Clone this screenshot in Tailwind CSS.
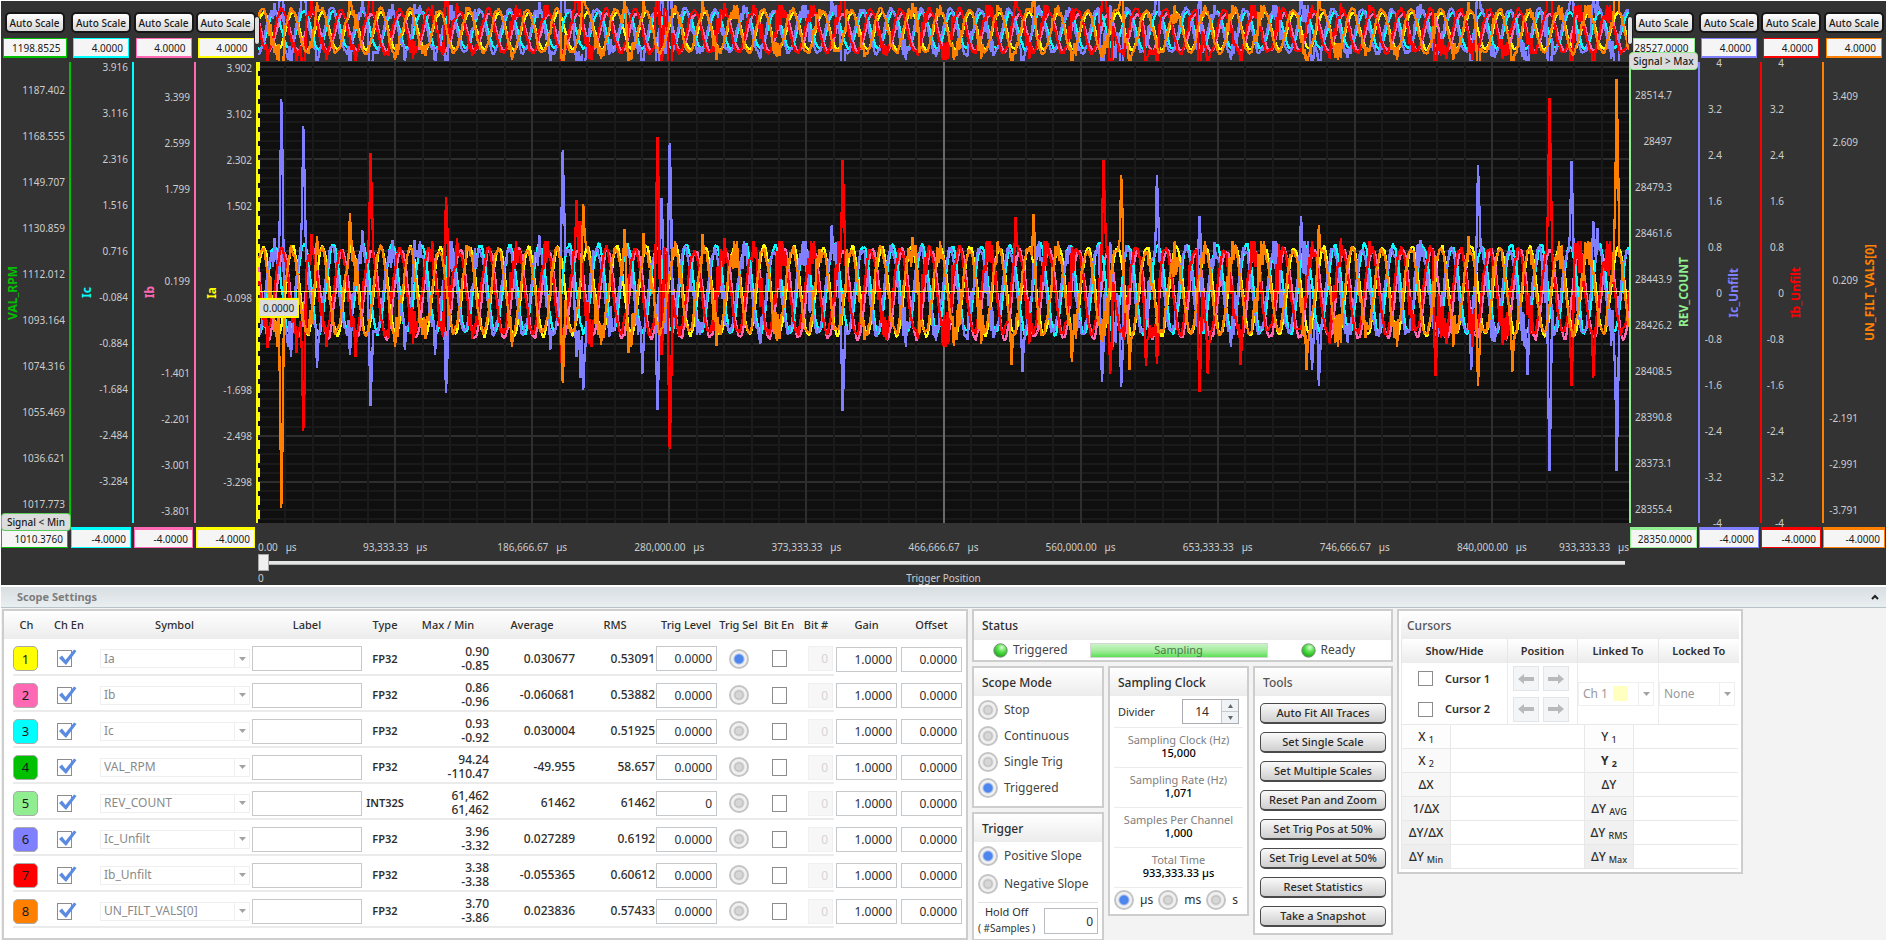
<!DOCTYPE html>
<html lang="en">
<head>
<meta charset="utf-8">
<title>Scope</title>
<script src="https://cdn.jsdelivr.net/npm/@tailwindcss/browser@4"></script>
</head>
<body class="min-h-screen bg-[#f3f3f3] text-[#2e2e2e] font-['Noto_Sans',sans-serif] text-[12px] leading-4">

<main class="flex flex-col border-l border-r border-white">

<!-- Scope display -->
<section class="flex border-t border-white bg-[#333333] pb-6 text-[10px] text-[#cccccc]" aria-label="Scope display">
  <div id="axes-left" class="flex"></div>

  <div class="flex min-w-0 flex-1 flex-col">
    <div class="relative h-[60px]">
      <svg id="overview" class="block h-full w-full" viewBox="0 0 1371 60" preserveAspectRatio="none" shape-rendering="crispEdges"></svg>
      <div class="absolute -left-1 top-[15px] h-[29px] w-[6px] rounded-sm border border-[#1c1c1c] bg-[#dedede]"></div>
      <div class="absolute -right-1 top-[15px] h-[29px] w-[6px] rounded-sm border border-[#1c1c1c] bg-[#dedede]"></div>
    </div>
    <div class="relative mt-px h-[461px] bg-[#0f0f0f]">
      <svg id="plot" class="block h-full w-full" viewBox="0 0 1371 461" preserveAspectRatio="none" shape-rendering="crispEdges"></svg>
      <div class="absolute left-0 top-[236px] border-2 border-[#ffff00] bg-[#dcdcdc] px-[3px] text-[10px] leading-4 text-[#1a1a1a]">0.0000</div>
    </div>
    <div class="mt-4 grid grid-cols-20 whitespace-pre leading-4" id="time-labels"></div>
    <input type="range" aria-label="Trigger Position" value="0" class="-mt-px h-[17px] w-full appearance-none bg-transparent pr-1 [&::-webkit-slider-runnable-track]:h-[4px] [&::-webkit-slider-runnable-track]:border-b [&::-webkit-slider-runnable-track]:border-[#b5b5b5] [&::-webkit-slider-runnable-track]:bg-[#e3e6e5] [&::-webkit-slider-thumb]:-mt-[7px] [&::-webkit-slider-thumb]:h-[17px] [&::-webkit-slider-thumb]:w-[11px] [&::-webkit-slider-thumb]:appearance-none [&::-webkit-slider-thumb]:border [&::-webkit-slider-thumb]:border-[#a8a8a8] [&::-webkit-slider-thumb]:bg-[#f0f0f0]">
    <div class="-mb-6 grid grid-cols-3 leading-[14px]"><span>0</span><span class="text-center">Trigger Position</span><span></span></div>
  </div>

  <div id="axes-right" class="flex"></div>
</section>

<!-- Settings header -->
<header class="flex h-[23px] items-center justify-between border-b border-t-2 border-b-[#b9c3ca] border-t-white bg-linear-to-b from-[#d9dee2] to-[#e9eef1] pl-4 pr-[7px]">
  <h1 class="text-[11px] font-bold text-[#7d7d7d]">Scope Settings</h1>
  <button type="button" aria-label="Collapse" class="flex"><svg width="8" height="6" viewBox="0 0 8 6"><path d="M1 5 L4 2 L7 5" fill="none" stroke="#222" stroke-width="2"/></svg></button>
</header>

<!-- Settings panels -->
<div class="flex items-start gap-1 pl-px pt-px">

  <section class="w-[966px] shrink-0 border-2 border-[#cdcdcd] bg-white pb-[10px]">
    <table class="w-full table-fixed border-collapse">
      <colgroup>
        <col class="w-[9px]"><col class="w-[27px]"><col class="w-[58px]"><col class="w-[153px]"><col class="w-[112px]"><col class="w-[44px]"><col class="w-[82px]"><col class="w-[86px]"><col class="w-[80px]"><col class="w-[62px]"><col class="w-[43px]"><col class="w-[38px]"><col class="w-[36px]"><col class="w-[65px]"><col class="w-[65px]"><col>
      </colgroup>
      <thead>
        <tr class="h-[28px] whitespace-nowrap bg-linear-to-b from-white to-[#ececec] text-[11px] [&>th]:p-0 [&>th]:font-medium">
          <th></th><th>Ch</th><th>Ch En</th><th>Symbol</th><th>Label</th><th>Type</th><th>Max / Min</th><th>Average</th><th>RMS</th><th>Trig Level</th><th>Trig Sel</th><th>Bit En</th><th>Bit #</th><th>Gain</th><th>Offset</th><th></th>
        </tr>
      </thead>
      <tbody id="channels"></tbody>
    </table>
  </section>

  <div class="flex w-[421px] shrink-0 flex-col gap-1">
    <section class="border-2 border-[#cdcdcd] bg-white">
      <h2 class="h-[29px] bg-linear-to-b from-white to-[#ececec] pl-2 pt-[7px] text-[12px] font-medium">Status</h2>
      <div class="flex h-5 items-center pl-[19px] pr-9">
        <svg width="15" height="15" viewBox="0 0 15 15"><use href="#led"/></svg>
        <span class="ml-[5px] text-[#444]">Triggered</span>
        <div role="progressbar" aria-label="Sampling" class="ml-[22px] flex h-[15px] w-[178px] items-center justify-center border border-[#d5d5d5] bg-linear-to-b from-[#c8f5c4] via-[#a5ec9f] via-50% to-[#58e052] text-[11px] text-[#4b7a4b]">Sampling</div>
        <svg class="ml-auto" width="15" height="15" viewBox="0 0 15 15"><use href="#led"/></svg>
        <span class="ml-[5px] text-[#444]">Ready</span>
      </div>
    </section>

    <div class="flex items-start gap-1">
      <div class="flex w-[132px] flex-col gap-1">
        <section class="border-2 border-[#cdcdcd] bg-white pb-2">
          <h2 class="h-7 bg-linear-to-b from-white to-[#ececec] pl-2 pt-[7px] text-[12px] font-medium">Scope Mode</h2>
          <div class="flex flex-col gap-[6px] px-1 pt-1 text-[#444]" id="modes"></div>
        </section>
        <section class="border-2 border-[#cdcdcd] bg-white">
          <h2 class="h-7 bg-linear-to-b from-white to-[#ececec] pl-2 pt-[7px] text-[12px] font-medium">Trigger</h2>
          <div class="flex flex-col gap-2 px-1 pb-2 pt-1 text-[#444]" id="slopes"></div>
          <div class="mx-1 flex justify-between border-t border-[#e2e2e2] pb-[2px]">
            <label for="hold" class="flex flex-col text-center text-[11px] leading-[17px]">Hold Off<span class="text-[10px]">( #Samples )</span></label>
            <input id="hold" value="0" class="mt-[5px] h-[26px] w-[54px] border border-[#b9bcc0] px-1 text-right">
          </div>
        </section>
      </div>

      <section class="w-[141px] border-2 border-[#cdcdcd] bg-white pb-1">
        <h2 class="h-7 bg-linear-to-b from-white to-[#ececec] pl-2 pt-[7px] text-[12px] font-medium">Sampling Clock</h2>
        <div class="mx-1 flex h-[31px] items-center justify-between pl-1 pr-1">
          <label for="divider" class="text-[11px]">Divider</label>
          <span class="flex h-[25px] w-[57px] border border-[#a9adb1]">
            <input id="divider" value="14" class="w-[38px] min-w-0 text-center">
            <span class="flex flex-1 flex-col divide-y divide-[#c9c9c9] border-l border-[#c9c9c9] bg-[#f0f3f5]">
              <button type="button" aria-label="Increase" class="flex flex-1 items-center justify-center"><svg width="5" height="4" viewBox="0 0 5 4"><path d="M0 4h5L2.500 0z" fill="#666"/></svg></button>
              <button type="button" aria-label="Decrease" class="flex flex-1 items-center justify-center"><svg width="5" height="4" viewBox="0 0 5 4"><path d="M0 0h5L2.500 4z" fill="#666"/></svg></button>
            </span>
          </span>
        </div>
        <dl class="mx-1 border-b border-[#ececec] text-center text-[11px] [&>div]:h-10 [&>div]:border-t [&>div]:border-[#ececec] [&>div]:pt-[5px] [&>div]:leading-[13px] [&_dd]:text-[11px] [&_dd]:font-medium [&_dd]:text-black [&_dt]:text-[#808080]">
          <div><dt>Sampling Clock (Hz)</dt><dd>15,000</dd></div>
          <div><dt>Sampling Rate (Hz)</dt><dd>1,071</dd></div>
          <div><dt>Samples Per Channel</dt><dd>1,000</dd></div>
          <div><dt>Total Time</dt><dd>933,333.33 µs</dd></div>
        </dl>
        <div class="flex items-center gap-[5px] px-1 pt-[2px]" id="units"></div>
      </section>

      <section class="w-[140px] border-2 border-[#cdcdcd] bg-white pb-[6px]">
        <h2 class="h-7 bg-linear-to-b from-white to-[#ececec] pl-2 pt-[7px] text-[12px] font-medium text-[#555]">Tools</h2>
        <div class="flex flex-col gap-2 px-[5px] pt-[7px] [&>button]:h-[21px] [&>button]:rounded-[5px] [&>button]:border [&>button]:border-b-2 [&>button]:border-[#4a4a4a] [&>button]:bg-linear-to-b [&>button]:from-[#fafafa] [&>button]:to-[#cfcfcf] [&>button]:text-[11px] [&>button]:leading-[14px] [&>button]:font-medium [&>button]:text-[#2a2a2a]">
          <button type="button">Auto Fit All Traces</button>
          <button type="button">Set Single Scale</button>
          <button type="button">Set Multiple Scales</button>
          <button type="button">Reset Pan and Zoom</button>
          <button type="button">Set Trig Pos at 50%</button>
          <button type="button">Set Trig Level at 50%</button>
          <button type="button">Reset Statistics</button>
          <button type="button">Take a Snapshot</button>
        </div>
      </section>
    </div>
  </div>

  <section class="w-[346px] shrink-0 border-2 border-[#cdcdcd] bg-white px-[2px] pb-[3px]">
    <h2 class="h-7 bg-linear-to-b from-white to-[#ececec] pl-[6px] pt-[7px] text-[12px] font-medium text-[#555]">Cursors</h2>
    <table class="w-[337px] table-fixed border-collapse">
      <colgroup><col class="w-[106px]"><col class="w-[70px]"><col class="w-[81px]"><col class="w-[80px]"></colgroup>
      <thead><tr class="h-6 bg-linear-to-b from-white to-[#ececec] text-[11px] [&>th]:border-l [&>th]:border-[#e6e6e6] [&>th]:p-0 [&>th]:font-semibold"><th>Show/Hide</th><th>Position</th><th>Linked To</th><th>Locked To</th></tr></thead>
      <tbody>
        <tr class="h-[31px] [&>td]:border-l [&>td]:border-[#ececec] [&>td]:p-0">
          <td><label class="flex items-center gap-3 pl-4 text-[11px] font-semibold"><input type="checkbox" class="h-[15px] w-[15px] appearance-none border border-[#8c8c8c] bg-white">Cursor 1</label></td>
          <td><div class="flex gap-1 pl-[5px] [&>button]:flex [&>button]:h-[25px] [&>button]:w-[26px] [&>button]:items-center [&>button]:justify-center [&>button]:border [&>button]:border-[#e3e6e8] [&>button]:bg-[#f4f5f6]"><button type="button" aria-label="Cursor 1 left"><svg width="16" height="10"><use href="#arrow-left"/></svg></button><button type="button" aria-label="Cursor 1 right"><svg width="16" height="10" class="-scale-x-100"><use href="#arrow-left"/></svg></button></div></td>
          <td rowspan="2"><div class="relative flex w-[76px] items-center">
            <select aria-label="Linked To" class="h-6 w-full appearance-none border border-[#efefef] bg-white pl-1 text-[#999]"><option>Ch 1</option></select>
            <span class="pointer-events-none absolute left-[35px] h-[15px] w-[15px] rounded-[2px] bg-[#ffffbf]"></span>
            <span class="pointer-events-none absolute right-0 flex h-6 w-4 items-center justify-center border-l border-[#efefef]"><svg width="7" height="4"><use href="#caret"/></svg></span>
          </div></td>
          <td rowspan="2"><div class="relative flex w-[76px] items-center">
            <select aria-label="Locked To" class="h-6 w-full appearance-none border border-[#efefef] bg-white pl-1 text-[#999]"><option>None</option></select>
            <span class="pointer-events-none absolute right-0 flex h-6 w-4 items-center justify-center border-l border-[#efefef]"><svg width="7" height="4"><use href="#caret"/></svg></span>
          </div></td>
        </tr>
        <tr class="h-[30px] [&>td]:border-l [&>td]:border-[#ececec] [&>td]:p-0">
          <td><label class="flex items-center gap-3 pl-4 text-[11px] font-semibold"><input type="checkbox" class="h-[15px] w-[15px] appearance-none border border-[#8c8c8c] bg-white">Cursor 2</label></td>
          <td><div class="flex gap-1 pl-[5px] [&>button]:flex [&>button]:h-[25px] [&>button]:w-[26px] [&>button]:items-center [&>button]:justify-center [&>button]:border [&>button]:border-[#e3e6e8] [&>button]:bg-[#f4f5f6]"><button type="button" aria-label="Cursor 2 left"><svg width="16" height="10"><use href="#arrow-left"/></svg></button><button type="button" aria-label="Cursor 2 right"><svg width="16" height="10" class="-scale-x-100"><use href="#arrow-left"/></svg></button></div></td>
        </tr>
      </tbody>
    </table>
    <table class="w-[337px] table-fixed border-collapse text-[12px] [&_sub]:text-[9px] [&_td]:border [&_td]:border-r-0 [&_td]:border-[#e8e8e8] [&_th]:border [&_th]:border-[#e8e8e8] [&_th]:p-0 [&_th]:font-medium [&_tr]:h-6">
      <colgroup><col class="w-[49px]"><col class="w-[134px]"><col class="w-[49px]"><col></colgroup>
      <tbody>
        <tr><th class="bg-[#fdfdfd]">X <sub>1</sub></th><td></td><th class="bg-[#fdfdfd]">Y <sub>1</sub></th><td></td></tr>
        <tr><th class="bg-[#fafafa]">X <sub>2</sub></th><td></td><th class="bg-[#fafafa]"><b>Y <sub>2</sub></b></th><td></td></tr>
        <tr><th class="bg-[#f7f7f7]">ΔX</th><td></td><th class="bg-[#f7f7f7]">ΔY</th><td></td></tr>
        <tr><th class="bg-[#f4f4f4]">1/ΔX</th><td></td><th class="bg-[#f4f4f4]">ΔY <sub>AVG</sub></th><td></td></tr>
        <tr><th class="bg-[#f1f1f1]">ΔY/ΔX</th><td></td><th class="bg-[#f1f1f1]">ΔY <sub>RMS</sub></th><td></td></tr>
        <tr><th class="bg-[#eeeeee]">ΔY <sub>Min</sub></th><td></td><th class="bg-[#eeeeee]">ΔY <sub>Max</sub></th><td></td></tr>
      </tbody>
    </table>
  </section>
</div>
</main>

<svg width="0" height="0" class="absolute" aria-hidden="true">
  <defs>
    <radialGradient id="led-fill" cx="0.6" cy="0.28" r="0.75"><stop offset="0" stop-color="#d8ffcf"/><stop offset="0.45" stop-color="#55e04a"/><stop offset="1" stop-color="#12a512"/></radialGradient>
    <g id="led"><circle cx="7.500" cy="7.500" r="6.700" fill="url(#led-fill)" stroke="#7d8f7d"/></g>
    <path id="arrow-left" d="M0 5 L6 0 V3 H16 V7 H6 V10 Z" fill="#b9b9b9"/>
    <path id="caret" d="M0 0 H7 L3.500 4 Z" fill="#a3a3a3"/>
    <path id="tick" d="M2 10 L5 7.500 L8.500 12 L17 1.500 L19.500 3 L9 17 Z" fill="#5a8be0"/>
  </defs>
</svg>

<script>
// ---- Vertical axes ----
const autoScale = `<button type="button" class="h-[21px] w-[60px] whitespace-nowrap rounded-[5px] border-2 border-[#161616] bg-linear-to-b from-white to-[#d6d6d6] text-[10px] leading-[14px] font-medium text-[#1a1a1a]">Auto Scale</button>`;
const axes = [
  {n:'VAL_RPM', c:'#00c000', w:'w-[70px]', f:'w-[64px]', side:'l', pad:'pt-[28px]', max:'1198.8525', min:'1010.3760', gap:'pl-1', low:true,
   t:['1187.402','1168.555','1149.707','1130.859','1112.012','1093.164','1074.316','1055.469','1036.621','1017.773']},
  {n:'Ic', c:'#00ffff', w:'w-[63px]', f:'w-[56px]', side:'l', pad:'pt-[5px]', max:'4.0000', min:'-4.0000', gap:'pl-2',
   t:['3.916','3.116','2.316','1.516','0.716','-0.084','-0.884','-1.684','-2.484','-3.284']},
  {n:'Ib', c:'#ff69b4', w:'w-[62px]', f:'w-[56px]', side:'l', pad:'pt-[35px]', max:'4.0000', min:'-4.0000', gap:'pl-2',
   t:['3.399','2.599','1.799','','0.199','','-1.401','-2.201','-3.001','-3.801']},
  {n:'Ia', c:'#ffff00', w:'w-[62px]', f:'w-[56px]', side:'l', pad:'pt-[6px]', max:'4.0000', min:'-4.0000', gap:'pl-2',
   t:['3.902','3.102','2.302','1.502','','-0.098','','-1.698','-2.498','-3.298']},
  {n:'REV_COUNT', c:'#90ee90', w:'w-[69px]', f:'w-[62px]', side:'r', pad:'pt-[33px]', max:'28527.0000', min:'28350.0000', gap:'w-[41px]', high:true,
   t:['28514.7','28497','28479.3','28461.6','28443.9','28426.2','28408.5','28390.8','28373.1','28355.4']},
  {n:'Ic_Unfilt', c:'#8080ff', w:'w-[62px]', f:'w-[56px]', side:'r', pad:'pt-px', max:'4.0000', min:'-4.0000', gap:'w-[22px]',
   t:['4','3.2','2.4','1.6','0.8','0','-0.8','-1.6','-2.4','-3.2','-4']},
  {n:'Ib_Unfilt', c:'#ff0000', w:'w-[62px]', f:'w-[56px]', side:'r', pad:'pt-px', max:'4.0000', min:'-4.0000', gap:'w-[22px]',
   t:['4','3.2','2.4','1.6','0.8','0','-0.8','-1.6','-2.4','-3.2','-4']},
  {n:'UN_FILT_VALS[0]', c:'#ff8000', w:'w-[64px]', f:'w-[56px]', side:'r', pad:'pt-[34px]', max:'4.0000', min:'-4.0000', gap:'w-[34px]',
   t:['3.409','2.609','','','0.209','','','-2.191','-2.991','-3.791']}
];
function axisHTML(a) {
  const left = a.side === 'l';
  const ticks = a.t.map(v => `<div class="h-[46px] text-right leading-[0px]">${v}</div>`).join('');
  const line = `<div class="w-[2px] shrink-0" style="background:${a.c}"></div>`;
  const name = `<div class="flex shrink-0 items-center"><span class="rotate-180 whitespace-nowrap text-[12px] leading-4 font-bold [writing-mode:vertical-rl]" style="color:${a.c}">${a.n}</span></div>`;
  const scale = left
    ? `<div class="flex h-[461px] ${a.gap}">${name}<div class="flex-1 pr-1 ${a.pad}">${ticks}</div>${line}</div>`
    : `<div class="flex h-[461px]">${line}<div class="mr-1 ${a.gap} ${a.pad}">${ticks}</div>${name}</div>`;
  const badge = 'whitespace-nowrap rounded-sm border bg-[#dcdcdc] text-center leading-4 font-medium text-[#1a1a1a]';
  return `<div class="relative flex flex-col ${a.w}">
    <div class="flex flex-col items-center pt-[11px] ${left ? 'pr-[3px]' : ''}">${autoScale}
      <input aria-label="${a.n} maximum" value="${a.max}" class="mt-[5px] h-5 ${a.f} border border-b-2 bg-[#f5f5f5] pr-[5px] text-right text-[10px] text-[#1a1a1a]" style="border-color:${a.c}">
    </div>
    <div class="mt-1">${scale}</div>
    <input aria-label="${a.n} minimum" value="${a.min}" class="${left ? 'mr-[3px]' : 'mx-px'} mt-1 h-[21px] border border-t-[3px] bg-[#f5f5f5] pr-[4px] text-right text-[10px] text-[#1a1a1a]" style="border-color:${a.c}">
    ${a.low ? `<div class="absolute left-0 right-0 top-[512px] border-[#00c000]/60 ${badge}">Signal &lt; Min</div>` : ''}
    ${a.high ? `<div class="absolute left-0 right-0 top-[51px] border-[#90ee90] ${badge}">Signal &gt; Max</div>` : ''}
  </div>`;
}
document.getElementById('axes-left').innerHTML = axes.slice(0, 4).map(axisHTML).join('');
document.getElementById('axes-right').innerHTML = axes.slice(4).map(axisHTML).join('');

// ---- Time labels ----
const times = ['0.00','93,333.33','186,666.67','280,000.00','373,333.33','466,666.67','560,000.00','653,333.33','746,666.67','840,000.00','933,333.33'];
document.getElementById('time-labels').innerHTML = times.map((t, i) =>
  `<span class="${i === 0 ? 'col-span-1' : i === 10 ? 'col-span-1 flex justify-end' : 'col-span-2 text-center'}">${t}   µs</span>`).join('');

// ---- Traces: x and y are in plot pixels, the zero line lies at y = 229 ----
let seed = 20;
const rnd = () => (seed = (seed * 16807) % 2147483647) / 2147483647;
const N = 1000, DX = 1371 / (N - 1), PERIOD = 29.45;
function sine(shift, amp, noise) {
  const v = [];
  for (let i = 0; i < N; i++) v.push(Math.cos(2 * Math.PI * (i * DX - 5.5 - shift) / PERIOD) * amp + (rnd() - 0.5) * noise);
  return v;
}
function raw(shift, spikes) {
  const v = sine(shift, 42, 9);
  for (let i = 0; i < N;) {
    i += 8 + Math.floor(rnd() * 20);
    const len = 2 + Math.floor(rnd() * 7), a = 8 + rnd() * 22;
    for (let k = 0; k < len && i < N; k++, i++) v[i] = Math.max(-56, Math.min(50, v[i] + (k % 2 ? a : -a) * (0.4 + rnd() * 0.6)));
  }
  for (const [x, y] of spikes) {
    const i = Math.min(N - 2, Math.round((x - 258) / DX)), p = 291 - y;
    v[i] = p; v[i + 1] = p * 0.66; v[i - 1] = p * 0.45;
  }
  return v;
}
const traces = [
  {c:'#ffff00', k:0.42, v:sine(0, 44, 5)},
  {c:'#ff69b4', k:0.42, v:sine(20, 44, 6).map(y => y - 3)},
  {c:'#00ffff', k:0.42, v:sine(11, 44, 6).map(y => y + 2)},
  {c:'#8080ff', k:0.52, v:raw(9.5, [[281,99],[303,126],[362,230],[562,150],[662,198],[670,143],[831,225],[1157,175],[1199,216],[1214,242],[1301,216],[1478,165],[1420,240],[1571,161],[1594,221],[1598,228],[393,240],[274,238],[539,235],[1110,242],[1066,250],[415,240],
    [370,406],[446,393],[317,368],[291,357],[350,355],[405,350],[435,355],[577,357],[580,378],[583,390],[642,374],[658,410],[551,350],[843,411],[1023,372],[1102,382],[1121,387],[1312,370],[1319,386],[1471,370],[1527,375],[1549,471],[1617,471]])},
  {c:'#ff0000', k:0.52, v:raw(18.5, [[370,153],[446,197],[577,200],[581,221],[658,137],[843,160],[1103,160],[1549,98],[1015,217],[1341,238],[312,234],[457,238],[724,238],[1575,243],
    [303,431],[670,449],[561,363],[268,348],[355,357],[1110,374],[1157,364],[1199,392],[1208,374],[1436,376],[1571,386],[1594,378],[296,353],[662,355],[1146,366],[1240,365]])},
  {c:'#ff8000', k:0.52, v:raw(-1, [[350,213],[583,204],[624,229],[643,233],[702,234],[912,237],[1034,214],[1121,175],[1319,225],[1617,79],[317,236],[1468,236],
    [281,508],[562,383],[629,353],[1012,365],[1072,362],[1306,370],[1129,370],[1478,386],[1512,372],[954,346]])}
];
const pathOf = (v, y0, k) => 'M' + v.map((y, i) => (i * DX).toFixed(1) + ' ' + (y0 - y * k).toFixed(1)).join('L');
const draw = (y0, scaled) => traces.map(t =>
  `<path d="${pathOf(t.v, y0, scaled ? t.k : 1)}" fill="none" stroke="${t.c}" stroke-width="2.3" stroke-linejoin="bevel"/>`).join('');

let grid = '';
for (let k = 0; k <= 50; k++) {
  const y = 5 + k * 9.22, major = k % 5 === 0;
  if (y < 461) grid += `<path d="M0 ${y.toFixed(1)}H1371" stroke="${major ? '#2e2e2e' : '#1a1a1a'}" stroke-width="2"/>`;
}
for (let k = 1; k < 50; k++) {
  const x = k * 27.42, major = k % 5 === 0;
  grid += `<path d="M${x.toFixed(1)} 0V461" stroke="${k === 25 ? '#6a6a6a' : major ? '#2e2e2e' : '#1a1a1a'}" stroke-width="2"/>`;
}
document.getElementById('plot').innerHTML = grid + draw(229, false)
  + '<path d="M0 229.500H1371" stroke="#ffff40"/><path d="M1 0V461" stroke="#ffff00" stroke-width="2" stroke-dasharray="9 5"/>';
document.getElementById('overview').innerHTML = draw(30, true);

// ---- Radio groups ----
const radioClass = "h-5 w-5 shrink-0 appearance-none rounded-full border-2 border-[#c4c4c4] bg-[radial-gradient(circle,#d6d6d6_0_3px,#bdbdbd_4px,#f1f1f1_6px)] checked:bg-[radial-gradient(circle,#4d86ec_0_4px,#a9c0ee_5px,#f1f1f1_6px)]";
const radios = (id, name, items, on) => document.getElementById(id).innerHTML = items.map(t =>
  `<label class="flex items-center gap-[6px]"><input type="radio" name="${name}" class="${radioClass}"${t === on ? ' checked' : ''}>${t}</label>`).join('');
radios('modes', 'mode', ['Stop','Continuous','Single Trig','Triggered'], 'Triggered');
radios('slopes', 'slope', ['Positive Slope','Negative Slope'], 'Positive Slope');
radios('units', 'unit', ['µs','ms','s'], 'µs');

// ---- Channel table ----
const channels = [
  ['#ffff00','Ia','FP32','0.90','-0.85','0.030677','0.53091','0.0000'],
  ['#ff69b4','Ib','FP32','0.86','-0.96','-0.060681','0.53882','0.0000'],
  ['#00ffff','Ic','FP32','0.93','-0.92','0.030004','0.51925','0.0000'],
  ['#00c000','VAL_RPM','FP32','94.24','-110.47','-49.955','58.657','0.0000'],
  ['#90ee90','REV_COUNT','INT32S','61,462','61,462','61462','61462','0'],
  ['#8080ff','Ic_Unfilt','FP32','3.96','-3.32','0.027289','0.6192','0.0000'],
  ['#ff0000','Ib_Unfilt','FP32','3.38','-3.38','-0.055365','0.60612','0.0000'],
  ['#ff8000','UN_FILT_VALS[0]','FP32','3.70','-3.86','0.023836','0.57433','0.0000']
];
const field = (label, v, cls) => `<input aria-label="${label}" value="${v}" class="block h-[25px] border border-[#c6c9cc] bg-white px-1 text-right ${cls}">`;
document.getElementById('channels').innerHTML = channels.map(([c, s, type, mx, mn, avg, rms, trig], i) => {
  const n = i + 1;
  return `<tr class="h-9 [&>td]:p-0 [&>td]:pt-1 [&>td:nth-child(n+2):nth-child(-n+13)]:border-b-2 [&>td:nth-child(n+2):nth-child(-n+13)]:border-[#ebebeb]">
    <td></td>
    <td><div class="flex h-[25px] w-[25px] items-center justify-center rounded-[5px] border border-[#aaaaaa] text-[13px] text-[#1a1a1a]" style="background:${c}">${n}</div></td>
    <td><label class="relative ml-[17px] block h-[17px] w-[15px]"><input type="checkbox" checked aria-label="Channel ${n} enable" class="block h-[17px] w-[15px] appearance-none border border-[#8c8c8c] bg-white"><svg class="pointer-events-none absolute left-0 -top-[2px]" width="20" height="18" viewBox="0 0 20 18"><use href="#tick"/></svg></label></td>
    <td><div class="relative ml-[2px] flex w-[150px] items-center"><select aria-label="Channel ${n} symbol" class="h-[19px] w-full appearance-none border border-[#efefef] bg-white pl-[3px] text-[12px] leading-4 text-[#8a8a8a]"><option>${s}</option></select><span class="pointer-events-none absolute right-0 flex h-[19px] w-4 items-center justify-center border-l border-[#efefef]"><svg width="7" height="4"><use href="#caret"/></svg></span></div></td>
    <td>${field('Channel ' + n + ' label', '', 'ml-px w-[110px]')}</td>
    <td class="text-center text-[11px] font-semibold">${type}</td>
    <td class="text-right text-[12px] font-medium leading-[14px]">${mx}<br>${mn}</td>
    <td class="text-right text-[12px] font-medium">${avg}</td>
    <td class="text-right text-[12px] font-medium">${rms}</td>
    <td>${field('Channel ' + n + ' trigger level', trig, 'ml-px w-[61px]')}</td>
    <td><input type="radio" name="trigsel" aria-label="Trigger on channel ${n}" class="mx-auto block ${radioClass}"${i ? '' : ' checked'}></td>
    <td><input type="checkbox" aria-label="Channel ${n} bit enable" class="mx-auto block h-[17px] w-[15px] appearance-none border border-[#8c8c8c] bg-white"></td>
    <td><input aria-label="Channel ${n} bit number" value="0" disabled class="ml-auto mr-px block h-[25px] w-[25px] border border-[#f0f0f0] bg-[#f7f7f7] px-1 text-right text-[#d5d5d5]"></td>
    <td>${field('Channel ' + n + ' gain', '1.0000', 'mx-auto w-[61px]')}</td>
    <td>${field('Channel ' + n + ' offset', '0.0000', 'mx-auto w-[61px]')}</td>
    <td></td>
  </tr>`;
}).join('');
</script>
</body>
</html>
